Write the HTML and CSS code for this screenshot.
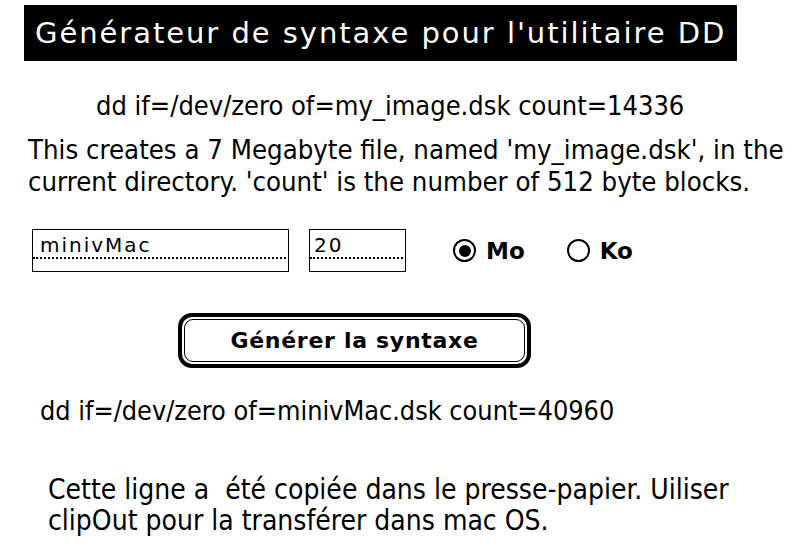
FILE: index.html
```html
<!DOCTYPE html>
<html lang="fr">
<head>
<meta charset="utf-8">
<title>Générateur de syntaxe pour l'utilitaire DD</title>
<link rel="stylesheet" href="styles.css">
</head>
<body>
<div class="card">
  <h1 class="title">Générateur de syntaxe pour l'utilitaire DD</h1>
  <p class="example">dd if=/dev/zero of=my_image.dsk count=14336</p>
  <p class="desc">This creates a 7 Megabyte file, named 'my_image.dsk', in the<br>current directory. 'count' is the number of 512 byte blocks.</p>
  <div class="form-row">
    <div class="field field-name"><span class="field-text">minivMac</span></div>
    <div class="field field-size"><span class="field-text">20</span></div>
    <label class="radio"><span class="radio-circle checked"></span><span class="radio-label">Mo</span></label>
    <label class="radio radio-ko"><span class="radio-circle"></span><span class="radio-label">Ko</span></label>
  </div>
  <div class="button-row">
    <div class="button"><div class="button-inner">Générer la syntaxe</div></div>
  </div>
  <p class="result">dd if=/dev/zero of=minivMac.dsk count=40960</p>
  <p class="note">Cette ligne a&nbsp; été copiée dans le presse-papier. Uiliser<br>clipOut pour la transférer dans mac OS.</p>
</div>
</body>
</html>
```
FILE: styles.css
```css
html, body {
  margin: 0;
  padding: 0;
  background: #fff;
}
body {
  width: 802px;
  height: 556px;
  overflow: hidden;
  color: #000;
  font-family: "DejaVu Sans", sans-serif;
}
.card {
  display: flex;
  flex-direction: column;
  align-items: flex-start;
}
.title {
  margin: 5px 0 0 24px;
  width: 713px;
  height: 56px;
  box-sizing: border-box;
  padding-left: 11px;
  background: #000;
  color: #fff;
  font-size: 29px;
  font-weight: normal;
  letter-spacing: 1.95px;
  line-height: 56px;
  white-space: nowrap;
}
.example, .desc, .result, .note {
  font-stretch: condensed;
  white-space: nowrap;
}
.example {
  margin: 32px 0 0 96px;
  font-size: 27px;
  line-height: 26px;
}
.desc {
  margin: 15px 0 0 28px;
  font-size: 27.3px;
  line-height: 32px;
}
.form-row {
  display: flex;
  align-items: center;
  margin: 31px 0 0 32px;
  height: 43px;
}
.field {
  box-sizing: border-box;
  height: 43px;
  border: 1px solid #000;
  padding: 0 3px 0 7px;
  position: relative;
}
.field::after {
  content: "";
  position: absolute;
  left: 0;
  right: 2px;
  top: 27px;
  border-top: 2px dotted #000;
}
.field-name { width: 257px; }
.field-size { width: 97px; margin-left: 20px; padding-left: 4px; }
.field-text {
  display: block;
  font-size: 20px;
  letter-spacing: 2px;
  line-height: 26px;
  margin-top: 2px;
}
.radio {
  display: flex;
  align-items: center;
  margin-left: 47px;
}
.radio-ko { margin-left: 42px; }
.radio-circle {
  box-sizing: border-box;
  width: 23px;
  height: 23px;
  border: 2px solid #000;
  border-radius: 50%;
  display: flex;
  align-items: center;
  justify-content: center;
}
.radio-circle.checked::before {
  content: "";
  width: 12px;
  height: 12px;
  border-radius: 50%;
  background: #000;
}
.radio-label {
  margin-left: 10px;
  font-size: 23px;
  font-weight: bold;
}
.button-row {
  margin: 41px 0 0 178px;
}
.button {
  box-sizing: border-box;
  width: 353px;
  height: 55px;
  border: 4px solid #000;
  border-radius: 14px;
  padding: 2px;
}
.button-inner {
  box-sizing: border-box;
  height: 100%;
  border: 1.5px solid #000;
  border-radius: 9px;
  display: flex;
  align-items: center;
  justify-content: center;
  font-size: 22px;
  font-weight: bold;
  letter-spacing: 0.7px;
}
.result {
  margin: 30px 0 0 40px;
  font-size: 26.8px;
  line-height: 26px;
}
.note {
  margin: 50px 0 0 48px;
  font-size: 28px;
  line-height: 31px;
}
```
